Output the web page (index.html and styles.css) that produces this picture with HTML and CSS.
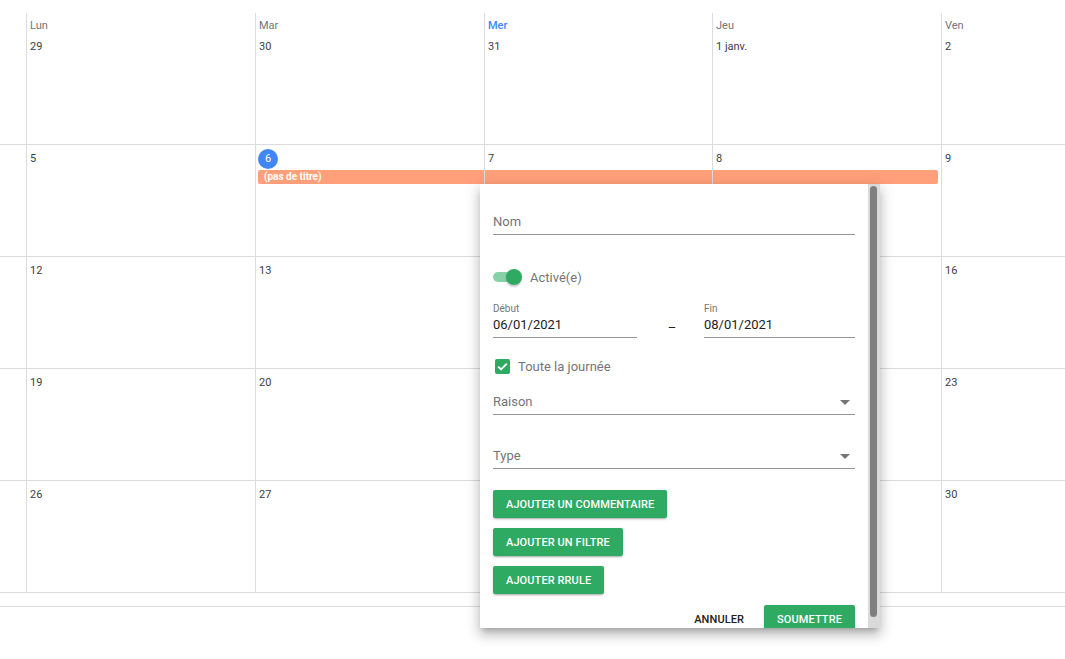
FILE: index.html
```html
<!DOCTYPE html>
<html lang="fr">
<head>
<meta charset="utf-8">
<title>Calendrier</title>
<link rel="stylesheet" href="styles.css">
</head>
<body>
<div class="calendar">
  <div class="grid">
    <div class="cell first"></div>
    <div class="cell first"><div class="dow">Lun</div><div class="date">29</div></div>
    <div class="cell first"><div class="dow">Mar</div><div class="date">30</div></div>
    <div class="cell first"><div class="dow today-dow">Mer</div><div class="date">31</div></div>
    <div class="cell first"><div class="dow">Jeu</div><div class="date">1 janv.</div></div>
    <div class="cell first"><div class="dow">Ven</div><div class="date">2</div></div>

    <div class="cell"></div>
    <div class="cell"><div class="date">5</div></div>
    <div class="cell"><div class="date"><span class="today">6</span></div><div class="event ev-start">(pas de titre)</div></div>
    <div class="cell"><div class="date">7</div><div class="event ev-mid"></div></div>
    <div class="cell"><div class="date">8</div><div class="event ev-end"></div></div>
    <div class="cell"><div class="date">9</div></div>

    <div class="cell"></div>
    <div class="cell"><div class="date">12</div></div>
    <div class="cell"><div class="date">13</div></div>
    <div class="cell"><div class="date">14</div></div>
    <div class="cell"><div class="date">15</div></div>
    <div class="cell"><div class="date">16</div></div>

    <div class="cell"></div>
    <div class="cell"><div class="date">19</div></div>
    <div class="cell"><div class="date">20</div></div>
    <div class="cell"><div class="date">21</div></div>
    <div class="cell"><div class="date">22</div></div>
    <div class="cell"><div class="date">23</div></div>

    <div class="cell"></div>
    <div class="cell"><div class="date">26</div></div>
    <div class="cell"><div class="date">27</div></div>
    <div class="cell"><div class="date">28</div></div>
    <div class="cell"><div class="date">29</div></div>
    <div class="cell"><div class="date">30</div></div>
  </div>
  <div class="footer-strip"></div>
</div>

<div class="dialog">
  <div class="dialog-body">
    <div class="field field-nom"><span class="placeholder">Nom</span></div>

    <div class="switch-row">
      <span class="switch"><span class="track"></span><span class="thumb"></span></span>
      <span class="switch-label">Activé(e)</span>
    </div>

    <div class="date-row">
      <div class="date-field start">
        <div class="small-label">Début</div>
        <div class="value">06/01/2021</div>
      </div>
      <div class="dash">–</div>
      <div class="date-field end">
        <div class="small-label">Fin</div>
        <div class="value">08/01/2021</div>
      </div>
    </div>

    <div class="check-row">
      <svg class="checkbox" width="15" height="15" viewBox="0 0 15 15"><rect x="0" y="0" width="15" height="15" rx="2" fill="#2eaa62"/><path d="M3.2 7.6 L6.1 10.4 L11.8 4.6" fill="none" stroke="#fff" stroke-width="1.8"/></svg>
      <span class="check-label">Toute la journée</span>
    </div>

    <div class="field select field-raison"><span class="placeholder">Raison</span><span class="arrow"></span></div>
    <div class="field select field-type"><span class="placeholder">Type</span><span class="arrow"></span></div>

    <div class="btn-stack">
      <button class="btn green">Ajouter un commentaire</button>
      <button class="btn green">Ajouter un filtre</button>
      <button class="btn green">Ajouter rrule</button>
    </div>

    <div class="actions">
      <button class="btn flat">Annuler</button>
      <button class="btn green">Soumettre</button>
    </div>
  </div>
  <div class="scrollbar"><div class="scroll-thumb"></div></div>
</div>
</body>
</html>
```
FILE: styles.css
```css
html, body {
  margin: 0;
  padding: 0;
  background: #fff;
  font-family: Roboto, "Liberation Sans", Arial, sans-serif;
}

body {
  width: 1065px;
  height: 659px;
  overflow: hidden;
  position: relative;
}

.calendar {
  padding-top: 13px;
  overflow: hidden;
  width: 1065px;
}

.grid {
  display: grid;
  grid-template-columns: 229px 229px 229px 228px 229px 229px;
  grid-template-rows: 132px repeat(4, 112px);
  margin-left: -203px;
  width: 1373px;
}

.cell {
  border-left: 1px solid #dadce0;
  border-bottom: 1px solid #dadce0;
  padding: 4px 3px 0 3px;
  min-width: 0;
}

.cell.first {
  padding-top: 4px;
}

.dow {
  font-size: 11px;
  line-height: 18px;
  color: #70757a;
  margin-bottom: 2px;
}

.today-dow {
  color: #4285f4;
  font-weight: 500;
}

.date {
  font-size: 11px;
  line-height: 20px;
  height: 20px;
  color: #3c4043;
}

.today {
  display: inline-block;
  width: 20px;
  height: 20px;
  border-radius: 50%;
  background: #4285f4;
  color: #fff;
  text-align: center;
  line-height: 20px;
  margin-left: -1px;
}

.event {
  height: 14px;
  margin-top: 1px;
  background: #ffa07a;
  color: #fff;
  font-size: 10px;
  font-weight: 700;
  line-height: 14px;
  white-space: nowrap;
}

.ev-start {
  margin-left: -1px;
  margin-right: -3px;
  padding-left: 6px;
  border-radius: 2px 0 0 2px;
}

.ev-mid {
  margin-left: -3px;
  margin-right: -3px;
}

.ev-end {
  margin-left: -3px;
  margin-right: 0;
  border-radius: 0 2px 2px 0;
}

.footer-strip {
  height: 13px;
  border-bottom: 1px solid #dadce0;
}

/* Dialog overlay */
.dialog {
  position: absolute;
  left: 480px;
  top: 184px;
  width: 400px;
  height: 444px;
  background: #fff;
  display: flex;
  box-shadow: 0 5px 5px -3px rgba(0,0,0,.2), 0 8px 10px 1px rgba(0,0,0,.14), 0 3px 14px 2px rgba(0,0,0,.12);
  overflow: hidden;
}

.dialog-body {
  flex: 1;
  padding: 0 13px;
  overflow: hidden;
  font-size: 13px;
}

.scrollbar {
  width: 12px;
  background: #dadada;
  padding: 2px 0 11px 2px;
  box-sizing: border-box;
}

.scroll-thumb {
  width: 7px;
  height: 100%;
  background: #7f7f7f;
  border-radius: 4px;
}

.field {
  position: relative;
  line-height: 20px;
  padding-bottom: 2px;
  border-bottom: 1px solid #949494;
}

.placeholder {
  color: #757575;
}

.field-nom { margin-top: 28px; }

.switch-row {
  margin-top: 32px;
  display: flex;
  align-items: center;
  height: 20px;
}

.switch {
  position: relative;
  width: 31px;
  height: 20px;
  display: inline-block;
}

.track {
  position: absolute;
  left: 0;
  top: 5px;
  width: 28px;
  height: 10px;
  border-radius: 5px;
  background: #86d1a6;
}

.thumb {
  position: absolute;
  left: 13px;
  top: 2px;
  width: 16px;
  height: 16px;
  border-radius: 50%;
  background: #2eaa62;
  box-shadow: 0 2px 2px rgba(0,0,0,.2);
}

.switch-label {
  margin-left: 6px;
  color: #757575;
}

.date-row {
  margin-top: 16px;
  display: flex;
  align-items: flex-end;
}

.date-field {
  border-bottom: 1px solid #949494;
  padding-bottom: 2px;
}

.date-field.start { width: 144px; }
.date-field.end { width: 151px; }

.small-label {
  font-size: 10px;
  line-height: 12px;
  color: #757575;
}

.value {
  line-height: 20px;
  color: #212121;
}

.dash {
  flex: 1;
  text-align: center;
  color: #212121;
  line-height: 20px;
  padding-bottom: 0;
  padding-left: 3px;
}

.check-row {
  margin-top: 18px;
  display: flex;
  align-items: center;
  height: 20px;
}

.checkbox {
  margin-left: 2px;
  display: block;
}

.check-label {
  margin-left: 8px;
  color: #757575;
}

.field-raison { margin-top: 16px; }
.field-type { margin-top: 31px; }

.arrow {
  position: absolute;
  right: 5px;
  top: 8px;
  width: 0;
  height: 0;
  border-left: 5px solid transparent;
  border-right: 5px solid transparent;
  border-top: 5px solid #757575;
}

.btn-stack {
  margin-top: 21px;
  display: flex;
  flex-direction: column;
  align-items: flex-start;
  gap: 10px;
}

.btn {
  font-family: Roboto, "Liberation Sans", Arial, sans-serif;
  font-size: 11px;
  font-weight: 500;
  text-transform: uppercase;
  letter-spacing: 0.1px;
  height: 28px;
  padding: 0 13px;
  border: none;
  border-radius: 2px;
  cursor: pointer;
}

.btn.green {
  background: #2eaa62;
  color: #fff;
  box-shadow: 0 2px 2px -1px rgba(0,0,0,.25), 0 1px 3px rgba(0,0,0,.12);
}

.btn.flat {
  background: transparent;
  color: #212121;
}

.actions {
  margin-top: 11px;
  display: flex;
  justify-content: flex-end;
  gap: 7px;
}

.actions .btn { height: 29px; }
```
